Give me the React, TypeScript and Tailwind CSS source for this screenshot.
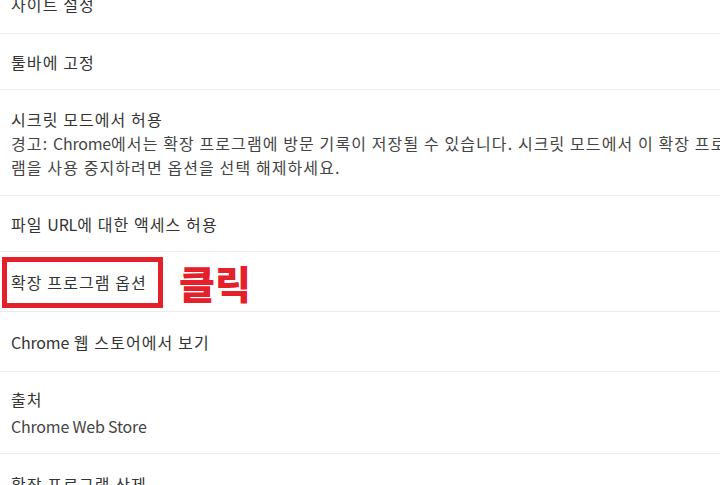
import React from "react";

const font = { fontFamily: '"Noto Sans CJK KR", "Noto Sans", sans-serif' };

function Row({ children, className = "" }: { children: React.ReactNode; className?: string }) {
  return (
    <div className={`relative flex flex-col justify-center border-b border-[#ebebeb] px-[11px] ${className}`}>
      {children}
    </div>
  );
}

export default function App() {
  return (
    <div className="h-[485px] w-[720px] overflow-hidden bg-white text-[16px] tracking-[1.1px] text-[#333]" style={font}>
      <div className="-mt-[26px] whitespace-nowrap">
        <Row className="h-[60px]">
          <span className="leading-6">사이트 설정</span>
        </Row>
        <Row className="h-[56px]">
          <span className="leading-6">툴바에 고정</span>
        </Row>
        <Row className="h-[106px]">
          <span className="leading-6">시크릿 모드에서 허용</span>
          <span className="leading-6 text-[#444]">
            경고: <span className="tracking-[-0.2px]">Chrome</span>에서는 확장 프로그램에 방문 기록이 저장될 수 있습니다. 시크릿 모드에서 이 확장 프로그
            <br />
            램을 사용 중지하려면 옵션을 선택 해제하세요.
          </span>
        </Row>
        <Row className="h-[56px]">
          <span className="leading-6">
            파일 <span className="tracking-[-0.2px]">URL</span>에 대한 액세스 허용
          </span>
        </Row>
        <Row className="h-[60px]">
          <span className="leading-6">확장 프로그램 옵션</span>
          <div className="absolute left-[2px] top-[5px] h-[51px] w-[161px] border-[5px] border-[#e4202b]" />
          <span className="absolute left-[179px] top-[9px] text-[39px] font-black leading-[42px] tracking-normal text-[#e4202b]">
            클릭
          </span>
        </Row>
        <Row className="h-[60px]">
          <span className="leading-6">
            <span className="tracking-[-0.2px]">Chrome</span> 웹 스토어에서 보기
          </span>
        </Row>
        <Row className="h-[82px]">
          <span className="leading-6">출처</span>
          <span className="mt-[3px] leading-6 tracking-[-0.2px] text-[#444]">Chrome Web Store</span>
        </Row>
        <Row className="h-[60px]">
          <span className="leading-6">확장 프로그램 삭제</span>
        </Row>
      </div>
    </div>
  );
}
